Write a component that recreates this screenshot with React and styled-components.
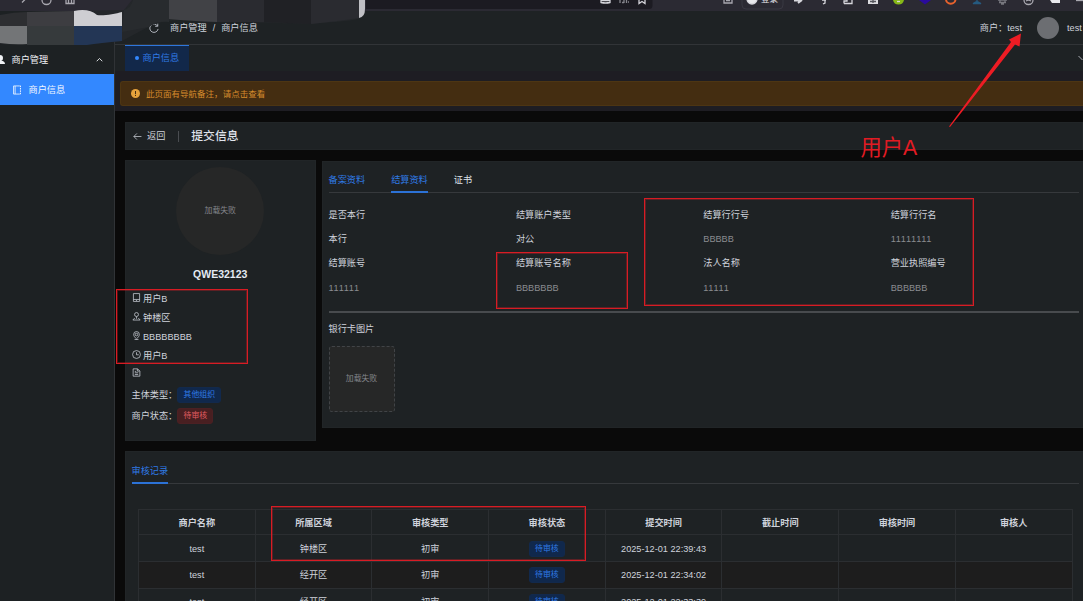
import React from 'react'
import styled, { createGlobalStyle, css } from 'styled-components'

const GlobalStyle = createGlobalStyle`
  * {
    box-sizing: border-box;
  }

  body {
    margin: 0;
    background: #0a0a0a;
    overflow: hidden;
  }
`

const Screen = styled.div`
  position: relative;
  width: 1083px;
  height: 601px;
  overflow: hidden;
  display: flex;
  flex-direction: column;
  background: #0a0a0a;
  color: #cfd3dc;
  font-family: 'Liberation Sans', 'Noto Sans CJK SC', sans-serif;
  font-size: 9.17px;
  font-kerning: none;
  line-height: 14px;
  white-space: nowrap;
`

const BrowserBar = styled.div`
  height: 11px;
  flex: none;
  background: #2b2a33;

  svg {
    display: block;
  }
`

const Body = styled.div`
  flex: 1;
  display: flex;
  min-height: 0;
`

const Sidebar = styled.aside`
  width: 115px;
  flex: none;
  padding-top: 34px;
  background: #1d2123;
  border-right: 1px solid #303336;
`

const MenuTitle = styled.div`
  height: 29px;
  display: flex;
  align-items: center;
  padding-right: 11px;
  color: #f0f2f5;

  span {
    flex: 1;
    margin-left: 6.5px;
  }
`

const MenuItem = styled.div`
  height: 31px;
  display: flex;
  align-items: center;
  gap: 6.5px;
  padding-left: 12px;
  background: #3388ff;
  color: #f2f7ff;
`

const Main = styled.main`
  flex: 1;
  min-width: 0;
  display: flex;
  flex-direction: column;
`

const Header = styled.header`
  height: 34px;
  flex: none;
  display: flex;
  align-items: center;
  padding-left: 34px;
  background: #1e2224;
  border-bottom: 1px solid #313437;
`

const Breadcrumb = styled.div`
  flex: 1;
  display: flex;
  gap: 6px;
  margin-left: 11px;
`

const Merchant = styled.div`
  margin-right: 15px;
`

const Avatar = styled.div`
  width: 22px;
  height: 22px;
  margin-right: 8px;
  border-radius: 50%;
  background: #6c6e72;
`

const UserName = styled.div`
  width: 16px;
`

const TabBar = styled.div`
  height: 26px;
  flex: none;
  display: flex;
  justify-content: space-between;
  align-items: center;
  padding-left: 10px;
  background: #1e2224;
`

const PageTab = styled.div`
  width: 64px;
  height: 26px;
  display: flex;
  align-items: center;
  gap: 3.5px;
  padding: 0 0 1px 10px;
  border-top: 1px solid #2e76dc;
  background: #12284a;
  color: #2f7ae5;

  &:before {
    content: '';
    width: 4px;
    height: 4px;
    border-radius: 50%;
    background: #3388ff;
  }
`

const NoticeArea = styled.div`
  height: 40px;
  flex: none;
  padding: 10px 0 5px 5px;
  background: #1e1d23;
`

const Notice = styled.div`
  height: 25px;
  display: flex;
  align-items: center;
  gap: 6px;
  padding-left: 10px;
  border: 1px solid #4d3513;
  border-right: 0;
  border-radius: 3px 0 0 3px;
  background: #442d11;
  color: #d58b2c;
  font-size: 8.52px;
`

const Content = styled.div`
  display: flex;
  flex-direction: column;
  padding: 11px 0 0 10px;
`

const Card = styled.section`
  background: #1e2224;
  border: 1px solid #212527;
`

const TitleCard = styled(Card)`
  height: 28px;
  display: flex;
  align-items: center;
  padding-left: 7px;
`

const Back = styled.div`
  display: flex;
  align-items: center;
  gap: 5px;
  padding-right: 12.5px;
`

const PageTitle = styled.h1`
  margin: 0;
  padding-left: 12.5px;
  border-left: 1px solid #4a4d51;
  font-size: 11.8px;
  font-weight: 500;
  line-height: 11px;
  color: #e0e4ec;
`

const Columns = styled.div`
  display: flex;
  align-items: flex-start;
  gap: 6px;
  margin: 10px 0;
`

const ProfileCard = styled(Card)`
  width: 191px;
  height: 281px;
  padding: 6px 6px 0 5.5px;
`

const Photo = styled.div`
  display: flex;
  align-items: center;
  justify-content: center;
  background: #262727;
  color: #82848a;
  font-size: 7.86px;

  ${props => props.round && css`
    width: 88px;
    height: 88px;
    margin: 0 auto;
    border-radius: 50%;
  `}

  ${props => props.dashed && css`
    width: 66px;
    height: 66px;
    margin-top: 10px;
    border: 1px dashed #414447;
    border-radius: 3px;
  `}
`

const ProfileName = styled.div`
  margin: 12px 0 8px;
  text-align: center;
  font-size: 10.5px;
  font-weight: bold;
  color: #e5eaf3;
`

const InfoRow = styled.div`
  height: 19px;
  display: flex;
  align-items: center;
  gap: 2.5px;

  svg {
    margin-bottom: 2px;
  }

  &:nth-of-type(7) svg {
    margin-bottom: 4px;
  }
`

const TagRow = styled.div`
  height: 21px;
  display: flex;
  align-items: center;
`

const Tag = styled.span`
  height: 16px;
  display: inline-flex;
  align-items: center;
  padding: 0 5.3px;
  border-radius: 3px;
  border: 1px solid ${props => (props.danger ? '#4b2023' : '#12294c')};
  background: ${props => (props.danger ? '#481f21' : '#10284c')};
  color: ${props => (props.danger ? '#e05c60' : '#2f7ae5')};
  font-size: 7.86px;
`

const DetailCard = styled(Card)`
  flex: 1;
  height: 267px;
  margin-top: 1px;
  padding: 5px 4px 0 5.5px;
  border-right: 0;
`

const Tabs = styled.div`
  display: flex;
  gap: 26px;
  height: 26px;
  border-bottom: 1px solid #36393c;
`

const Tab = styled.div`
  height: 26px;
  line-height: 26px;
  color: ${props => (props.blue ? '#2f7ae5' : '#dfe3ea')};
  border-bottom: ${props => (props.active ? '2px solid #2c72d6' : '0')};
`

const Fields = styled.div`
  display: grid;
  grid-template-columns: repeat(4, 187.4px);
  grid-auto-rows: 24.2px;
  align-items: center;
  height: 120px;
  padding-top: 10px;
  border-bottom: 2px solid #484b4e;
`

const Value = styled.div`
  color: ${props => (props.muted ? '#8a8c90' : '#cfd3dc')};
`

const PictureLabel = styled.div`
  margin-top: 9px;
`

const RecordCard = styled(Card)`
  height: 170px;
  padding: 6px 4px 0 5.5px;
  border-right: 0;
`

const Table = styled.div`
  display: grid;
  grid-template-columns: repeat(8, 116.7px);
  margin: 25px 0 0 6.5px;
  border-top: 1px solid #2b2e31;
  border-left: 1px solid #2b2e31;
  width: 935px;
`

const Cell = styled.div`
  height: ${props => (props.head ? 25.3 : 26.7)}px;
  display: flex;
  align-items: center;
  justify-content: center;
  padding-top: 1px;
  border-right: 1px solid #2b2e31;
  border-bottom: 1px solid #2b2e31;
  background: ${props => (props.striped ? '#1d1d1d' : 'transparent')};
  font-weight: ${props => (props.head ? 'bold' : 'normal')};
`

const Overlay = styled.svg`
  position: absolute;
  left: 0;
  top: 0;
`

const Mark = styled.div`
  position: absolute;
  left: ${props => props.$x}px;
  top: ${props => props.$y}px;
  width: ${props => props.$w}px;
  height: ${props => props.$h}px;
  border: 1px solid #d81c24;
  box-shadow: inset 0 0 0 1px rgba(216, 28, 36, 0.35);
`

const MarkLabel = styled.div`
  position: absolute;
  left: 860.5px;
  top: 134px;
  font-size: 21.3px;
  line-height: 28px;
  color: #e21b23;
`

const SignIn = styled.div`
  position: absolute;
  left: 761px;
  top: -7px;
  font-size: 8.5px;
  line-height: 12px;
  color: #e4e4ea;
`

const fields = [
  ['是否本行', '结算账户类型', '结算行行号', '结算行行名'],
  ['本行', '对公', 'BBBBB', '11111111'],
  ['结算账号', '结算账号名称', '法人名称', '营业执照编号'],
  ['111111', 'BBBBBBB', '11111', 'BBBBBB'],
]

const heads = ['商户名称', '所属区域', '审核类型', '审核状态', '提交时间', '截止时间', '审核时间', '审核人']

const records = [
  ['test', '钟楼区', '初审', '待审核', '2025-12-01 22:39:43', '', '', ''],
  ['test', '经开区', '初审', '待审核', '2025-12-01 22:34:02', '', '', ''],
  ['test', '经开区', '初审', '待审核', '2025-12-01 22:33:39', '', '', ''],
]

const Line = ({ size = 9, box = 16, children, ...rest }) => (
  <svg width={size} height={size} viewBox={`0 0 ${box} ${box}`} fill="none" stroke="currentColor" strokeWidth="1.3" {...rest}>
    {children}
  </svg>
)

const infos = [
  { text: '用户B', icon: <path d="M2.500 1h11v14h-11zM2.500 11.500h11M7 13.300h2" /> },
  { text: '钟楼区', icon: <path d="M8 1a3.500 3.500 0 1 0 0 7 3.500 3.500 0 1 0 0-7M8 8v4M5 10.500L1.500 14.300h13L11 10.500" /> },
  { text: 'BBBBBBBB', icon: <path d="M8 14c-3-2.500-5-5-5-8a5 5 0 0 1 10 0c0 3-2 5.500-5 8zM8 4a2.300 2.300 0 1 0 0 4.600A2.300 2.300 0 1 0 8 4M4.500 15h7" /> },
  { text: '用户B', icon: <path d="M8 1a7 7 0 1 0 0 14A7 7 0 1 0 8 1M8 4v4.500h4" /> },
  { text: '', icon: <path d="M2 1.500h8l4 4v9H2zM9.500 1.500v4h4M5 6h2.500M5 8.500h6M5 11.500h6" /> },
]

const BrowserIcons = () => (
  <svg width="1083" height="11" viewBox="0 0 1083 11" fill="none" stroke="#d6d6dc" strokeWidth="1.300">
    <path d="M366 0h286.500v5.500q0 3.500-3.500 3.500H366z" fill="#1c1b22" stroke="none" />
    <path d="M22 2.500l3-3M42 0a4.500 4.500 0 0 0 9 0M66 0v3.500h8V0M68.500 0v3M71.500 0v3" stroke="#a9a8b0" />
    <path d="M601 0v2.500q4.500 1 9 0V0M601 .5h9M639 0v3.500l3-2 3 2V0" />
    <path d="M620 0v3M622 2.500h2M624 0v3M626.500 0v3M628 2h1" stroke="#85858c" />
    <path d="M742 0v5q0 4 4 4h33q4 0 4-4V0" stroke="#393842" strokeWidth="1" />
    <path d="M724 0v3h8V0M726 .5h4" stroke="#a9a8b0" />
    <path d="M747 -1a5 5 0 0 0 10 0z" fill="#e8e8ec" />
    <path d="M794 .5h7M798 3l4-3" strokeWidth="2" />
    <path d="M822 0h4M825 0v3l-2 1M844 3.500V1h3V-1M844 3.500h8V0" />
    <path d="M868 0h10v4h-10z" fill="#dcdce0" stroke="none" />
    <path d="M870 1.500h6M873 0v3" stroke="#55555c" />
    <path d="M893 0h11q-1 4.500-5.500 4.500T893 0z" fill="#86b817" stroke="none" />
    <path d="M897 1.500h3" />
    <path d="M919 0h12l-6 4.500z" fill="#2a0b9c" stroke="none" />
    <path d="M946 -1a4.500 4.500 0 0 0 9.500 0" stroke="#e8622d" strokeWidth="2" />
    <path d="M977 0v3M973 3.500l3-1.500h2l3 1.500z" stroke="#255a80" fill="#255a80" />
    <path d="M998 0h9M999 2.500h7M1001 4h3M1000 0v3M1005 0v3" stroke="#77777e" />
    <path d="M1024 0a4.500 4.500 0 0 0 9 0M1026 1l2.500-1 2.500 1" stroke="#a9a8b0" />
    <path d="M1050 0h10v3h-8z" fill="#e8e8ec" stroke="none" />
    <path d="M1076 .5h7" stroke="#a9a8b0" />
  </svg>
)

const Mosaic = () => (
  <>
    <path d="M0 16C14 12 27 12 40 13 54 13 66 12 75 11L124 10 132 0H365V10Q365 17 358 19C345 22 329 22 311 24 280 23 265 23 251 22 220 21 205 22 190 20 172 20 160 21 150 26L122 41C100 43 85 45 72 45 48 44 20 46 0 44z" fill="#24272a" />
    <path d="M124 10Q131 8 133 0H169V22Q155 21 149 27L122 32z" fill="#282b2e" />
    <path d="M0 15Q14 12 27 12V26H0z" fill="#2d2e31" />
    <path d="M27 12L74 11V26H27z" fill="#3d3d41" />
    <path d="M0 26H27V44Q14 45 0 43z" fill="#737577" />
    <path d="M27 26H74V45H27z" fill="#363a3c" />
    <path d="M74 11Q89 8 97 15C103 16 115 14 122 12V26H74z" fill="#ceced2" />
    <path d="M74 26H122V41Q100 43 87 45H74z" fill="#233655" />
    <path d="M169 0H217V22Q190 21 169 19z" fill="#414246" />
    <path d="M217 0H264V22L217 22z" fill="#2a2b30" />
    <path d="M264 0H311V24L264 22z" fill="#202125" />
    <path d="M311 0H359V18Q340 21 311 24z" fill="#2a2b30" />
    <path d="M359 0H365V9Q365 17 359 18z" fill="#c0c0c5" />
  </>
)

export default function App() {
  return (
    <Screen>
      <GlobalStyle />
      <BrowserBar>
        <BrowserIcons />
      </BrowserBar>
      <Body>
        <Sidebar>
          <MenuTitle>
            <svg width="5" height="9" viewBox="0 0 5 9" fill="currentColor">
              <path d="M0 0q3 0 3 3T1 5.500q4 .5 4 3.500H0z" />
            </svg>
            <span>商户管理</span>
            <Line size={7} box={10}><path d="M1 7.500l4-4 4 4" /></Line>
          </MenuTitle>
          <MenuItem>
            <Line size={10}>
              <path d="M12.500 1.500H2.500v13h10M5 1.500v13" />
              <path d="M13.500 1v14" strokeWidth="1.600" strokeDasharray="2.400 1.400" />
            </Line>
            商户信息
          </MenuItem>
        </Sidebar>
        <Main>
          <Header>
            <Line size={10}><path d="M13.800 5A6.700 6.700 0 1 0 14.600 9.500M14 1v4.200h-4.200" /></Line>
            <Breadcrumb>
              <span>商户管理</span>
              <span>/</span>
              <span>商户信息</span>
            </Breadcrumb>
            <Merchant>商户：test</Merchant>
            <Avatar />
            <UserName>test</UserName>
          </Header>
          <TabBar>
            <PageTab>商户信息</PageTab>
            <svg width="5" height="6" viewBox="0 0 5 6" fill="none" stroke="#a8abb2">
              <path d="M.5 1l4 4" />
            </svg>
          </TabBar>
          <NoticeArea>
            <Notice>
              <svg width="9" height="9" viewBox="0 0 9 9">
                <circle cx="4.500" cy="4.500" r="4.500" fill="#e6a23c" />
                <path d="M4.500 2v3.200M4.500 6v1" stroke="#442d11" strokeWidth="1" />
              </svg>
              此页面有导航备注，请点击查看
            </Notice>
          </NoticeArea>
          <Content>
            <TitleCard>
              <Back>
                <Line size={9}><path d="M15 8H1.500M7 2.500L1.500 8 7 13.500" /></Line>
                返回
              </Back>
              <PageTitle>提交信息</PageTitle>
            </TitleCard>
            <Columns>
              <ProfileCard>
                <Photo round>加载失败</Photo>
                <ProfileName>QWE32123</ProfileName>
                {infos.map((info, i) => (
                  <InfoRow key={i}>
                    <Line size={9}>{info.icon}</Line>
                    {info.text}
                  </InfoRow>
                ))}
                <TagRow>主体类型：<Tag>其他组织</Tag></TagRow>
                <TagRow>商户状态：<Tag danger>待审核</Tag></TagRow>
              </ProfileCard>
              <DetailCard>
                <Tabs>
                  <Tab blue>备案资料</Tab>
                  <Tab blue active>结算资料</Tab>
                  <Tab>证书</Tab>
                </Tabs>
                <Fields>
                  {fields.map((row, i) => row.map((text, j) => (
                    <Value key={`${i}-${j}`} muted={i % 2 === 1 && /^\w+$/.test(text)}>{text}</Value>
                  )))}
                </Fields>
                <PictureLabel>银行卡图片</PictureLabel>
                <Photo dashed>加载失败</Photo>
              </DetailCard>
            </Columns>
            <RecordCard>
              <Tabs>
                <Tab blue active>审核记录</Tab>
              </Tabs>
              <Table>
                {heads.map(text => <Cell head key={text}>{text}</Cell>)}
                {records.map((row, i) => row.map((text, j) => (
                  <Cell key={`${i}-${j}`} striped={i % 2 === 1}>
                    {j === 3 ? <Tag>{text}</Tag> : text}
                  </Cell>
                )))}
              </Table>
            </RecordCard>
          </Content>
        </Main>
      </Body>
      <SignIn>登录</SignIn>
      <Overlay width="1083" height="601" viewBox="0 0 1083 601">
        <Mosaic />
        <path d="M949 126.500L1011 42 1009 39.500 1021 33.500 1019.500 46.500 1015 44.500 950 127z" fill="#ed1c24" />
      </Overlay>
      <Mark $x={116} $y={289} $w={132} $h={75} />
      <Mark $x={495.5} $y={251.5} $w={132} $h={57} />
      <Mark $x={643.5} $y={197.5} $w={330} $h={108} />
      <Mark $x={270.5} $y={505.5} $w={315} $h={55} />
      <MarkLabel>用户A</MarkLabel>
    </Screen>
  )
}
